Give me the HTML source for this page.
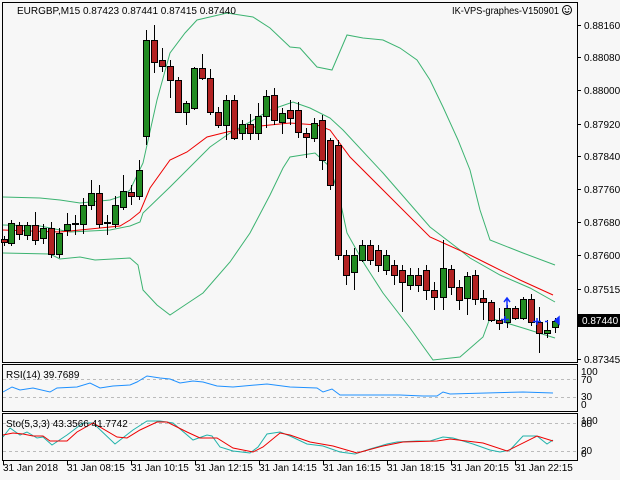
<!DOCTYPE html>
<html><head><meta charset="utf-8"><style>
body{margin:0;width:620px;height:480px;background:#f7f7f7;overflow:hidden;font-family:"Liberation Sans",sans-serif;}
svg{position:absolute;left:0;top:0}
text{font-family:"Liberation Sans",sans-serif;font-size:10px;fill:#000}
</style></head><body>
<svg id="s" width="620" height="480" xmlns="http://www.w3.org/2000/svg">
<rect x="0" y="0" width="620" height="480" fill="#f7f7f7"/>
<g fill="none" stroke="#000" stroke-width="1">
<rect x="2.5" y="2.5" width="575" height="360"/>
<rect x="2.5" y="364.5" width="575" height="47"/>
<rect x="2.5" y="413.5" width="575" height="47"/>
</g>
<g stroke="#bbb" stroke-dasharray="3,3">
<line x1="3" y1="379.5" x2="577" y2="379.5"/><line x1="3" y1="397.5" x2="577" y2="397.5"/>
<line x1="3" y1="423.5" x2="577" y2="423.5"/><line x1="3" y1="451.5" x2="577" y2="451.5"/>
</g>
<g id="lines" fill="none" stroke-width="1"></g>
<g id="c"></g>
<g fill="#1030ff" stroke="#1030ff" stroke-width="1.5">
<path d="M507 308V299M504 302l3-4 3 4" fill="none"/>
<path d="M501 319.5h8M505 316v7" fill="none"/>
<path d="M533 321.5h8M537 318v7" fill="none"/>
<path d="M545 321.5h3" fill="none"/>
<path d="M559 317v7l-4-3.5z"/>
</g>
<text x="17" y="14">EURGBP,M15  0.87423 0.87441 0.87415 0.87440</text>
<text x="559" y="14" text-anchor="end" textLength="107" lengthAdjust="spacingAndGlyphs">IK-VPS-graphes-V150901</text>
<circle cx="567" cy="10" r="4.5" fill="none" stroke="#000"/><circle cx="565.3" cy="9" r=".7"/><circle cx="568.7" cy="9" r=".7"/><path d="M564.8 11.3q2.2 2 4.4 0" fill="none" stroke="#000"/>
<text x="6" y="378">RSI(14) 39.7689</text>
<text x="6" y="427">Sto(5,3,3) 43.3566 41.7742</text>
<g id="ax"></g>
<rect x="578" y="314" width="42" height="13" fill="#000"/>
<text x="582" y="324" style="fill:#fff">0.87440</text>
</svg>
<script>
var s=document.getElementById('s'),ns='http://www.w3.org/2000/svg';
function el(p,t,a){var e=document.createElementNS(ns,t);for(var k in a)e.setAttribute(k,a[k]);p.appendChild(e);return e;}
var L=document.getElementById('lines');
function pl(pts,c){el(L,'polyline',{points:pts,stroke:c});}
pl("3,197 40,198 60,200 80,203 110,200 122,196 130,190 143,163 157,100 170,53 185,33 197,20 227,13 253,17 270,28 290,47 300,48 317,67 332,70 347,35 363,38 383,40 400,48 417,60 430,80 443,107 458,140 470,170 480,210 490,240 523,253 555,265","#3cb371");
pl("3,225 40,226 70,232 110,230 130,226 140,222 143,213 170,187 210,147 230,133 250,122 270,110 293,102 310,108 330,118 343,130 383,173 430,227 460,250 470,258 500,275 530,288 555,302","#3cb371");
pl("3,253 50,254 60,259 80,257 95,260 130,258 138,265 143,290 157,305 170,315 185,305 203,293 230,262 250,233 270,195 283,168 290,157 315,153 330,167 340,200 347,233 365,265 383,293 410,328 433,360 460,357 483,337 490,318 523,328 555,338","#3cb371");
pl("3,230 30,231 60,232 100,228 120,226 130,220 140,212 150,188 170,160 187,152 207,137 227,132 260,126 290,123 317,125 330,130 350,157 383,190 430,237 470,255 490,265 520,280 553,295","#e00");
pl("3,392 12,387 20,390 33,388 50,392 57,388 77,387 90,383 100,388 113,386 130,385 137,382 147,376 160,378 170,379 180,383 193,381 203,382 217,386 233,387 267,384 290,387 317,388 323,392 332,389 340,395 400,395 423,396 437,396 443,392 450,394 523,392 553,393","#1e90ff");
pl("3,437 10,428 20,435 27,432 37,438 43,437 52,445 67,435 83,423 93,423 115,444 133,430 147,421 160,421 173,423 193,440 207,435 212,436 220,447 233,451 250,453 258,447 267,434 280,432 290,436 307,444 323,446 340,452 355,454 370,449 387,444 397,442 417,441 430,441 443,437 453,438 473,444 490,450 500,452 510,450 523,436 537,436 547,444 553,440","#20b2aa");
pl("3,435 13,433 23,434 33,436 43,436 50,441 67,441 77,432 93,423 117,437 127,438 140,430 157,422 167,422 187,432 200,438 217,438 233,448 253,452 263,447 280,433 290,435 310,442 333,446 357,453 383,446 403,442 437,441 450,439 483,443 507,451 537,436 553,441","#e00");
var C=[[4,239,242,236,246,0],[11,223,243,220,246,1],[19,225,234,222,240,0],[27,225,235,222,240,1],[35,225,240,212,245,0],[43,228,238,224,244,1],[51,228,254,222,258,0],[59,233,254,228,258,1],[67,224,230,213,236,1],[75,223,224,215,235,1],[83,205,224,198,234,1],[91,193,205,180,210,1],[99,193,224,185,228,0],[107,222,223,215,235,1],[115,205,224,196,228,1],[123,191,207,175,210,1],[131,192,196,185,205,0],[139,170,196,160,200,1],[146,40,136,30,145,1],[154,40,62,25,73,0],[162,60,66,48,72,0],[170,66,80,60,98,0],[178,80,112,77,113,0],[186,103,112,101,125,1],[194,68,108,67,110,1],[202,68,78,54,80,0],[210,78,112,69,115,0],[218,112,125,107,128,0],[226,100,125,95,140,1],[234,100,138,95,140,0],[242,124,133,120,140,1],[250,124,133,114,140,0],[258,116,133,103,140,1],[266,96,116,90,128,1],[274,95,120,88,125,0],[282,113,122,108,134,1],[290,110,118,100,125,0],[298,110,132,102,138,0],[306,133,137,128,158,0],[314,123,138,118,142,1],[322,120,160,115,170,0],[330,140,185,138,190,0],[338,145,255,140,260,0],[346,255,275,250,285,0],[354,255,272,248,290,1],[362,245,260,240,262,1],[370,245,260,240,265,0],[378,250,265,245,272,0],[386,255,270,250,275,1],[394,265,275,260,285,0],[402,270,282,265,312,0],[410,275,285,268,290,1],[418,275,285,268,292,0],[426,270,290,265,300,0],[434,290,297,282,310,0],[443,268,297,240,310,1],[451,269,287,265,295,0],[459,287,300,280,310,0],[467,276,298,272,315,1],[475,275,299,270,305,0],[483,298,302,290,320,0],[491,302,320,300,322,0],[499,320,323,308,330,0],[507,308,322,305,328,1],[515,308,318,306,320,0],[523,299,318,297,320,1],[531,299,322,294,326,0],[539,322,333,307,353,0],[547,330,333,320,338,1],[555,321,327,318,333,1]];
var G=document.getElementById('c');
C.forEach(function(c){var x=c[0];el(G,'line',{x1:x+.5,x2:x+.5,y1:c[3],y2:c[4],stroke:'#000'});
el(G,'rect',{x:x-2.5,y:c[1]+.5,width:6,height:Math.max(1,c[2]-c[1]),fill:c[5]?'#228b22':'#b22222',stroke:'#000'});});
var A=document.getElementById('ax');
[["0.88160",25],["0.88080",57],["0.88000",90],["0.87920",124],["0.87840",156],["0.87760",189],["0.87680",222],["0.87600",255],["0.87515",289],["0.87345",359]].forEach(function(a){
el(A,'line',{x1:577,x2:581,y1:a[1]+.5,y2:a[1]+.5,stroke:'#000'});var t=el(A,'text',{x:584,y:a[1]+4});t.textContent=a[0];});
[["100",375],["70",383],["30",400],["0",408],["100",424],["80",427],["20",454],["0",457]].forEach(function(a){var t=el(A,'text',{x:581,y:a[1]});t.textContent=a[0];});
["31 Jan 2018","31 Jan 08:15","31 Jan 10:15","31 Jan 12:15","31 Jan 14:15","31 Jan 16:15","31 Jan 18:15","31 Jan 20:15","31 Jan 22:15"].forEach(function(l,i){var x=3+64*i;
el(A,'line',{x1:x+.5,x2:x+.5,y1:461,y2:465,stroke:'#000'});var t=el(A,'text',{x:x,y:471});t.textContent=l;});
</script>
</body></html>
